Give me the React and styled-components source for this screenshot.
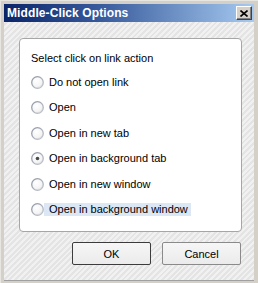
import React from "react";
import styled, { createGlobalStyle } from "styled-components";

const GlobalStyle = createGlobalStyle`
  html, body {
    margin: 0;
    padding: 0;
    background: #d4d0c8;
  }
  * {
    box-sizing: border-box;
  }
`;

const options = [
  "Do not open link",
  "Open",
  "Open in new tab",
  "Open in background tab",
  "Open in new window",
  "Open in background window",
];

const RadioIcon = ({ checked }) => (
  <svg width="13" height="13" viewBox="0 0 13 13">
    <defs>
      <linearGradient id="rim" x1="0" y1="0" x2="1" y2="1">
        <stop offset="0" stopColor="#8e95a2" />
        <stop offset="1" stopColor="#c4c8d0" />
      </linearGradient>
      <radialGradient id="fill" cx="0.4" cy="0.35" r="0.7">
        <stop offset="0" stopColor="#ffffff" />
        <stop offset="0.7" stopColor="#f4f4f4" />
        <stop offset="1" stopColor="#d8d8d8" />
      </radialGradient>
    </defs>
    <circle cx="6.5" cy="6.5" r="5.8" fill="url(#fill)" stroke="url(#rim)" strokeWidth="1.3" />
    {checked && <circle cx="6.5" cy="6.5" r="1.8" fill="#4a4a4a" />}
  </svg>
);

export default function App() {
  return (
    <Window>
      <GlobalStyle />
      <TitleBar>
        <Title>Middle-Click Options</Title>
        <CloseButton>
          <svg width="8" height="7" viewBox="0 0 8 7">
            <path d="M0.5 0.5 L7.5 6.5 M7.5 0.5 L0.5 6.5" stroke="#000" strokeWidth="1.6" />
          </svg>
        </CloseButton>
      </TitleBar>
      <Body>
        <Panel>
          <Heading>Select click on link action</Heading>
          <OptionList>
            {options.map((label, idx) => (
              <Option key={label}>
                <RadioIcon checked={idx === 3} />
                <Label $focused={idx === 5}>{label}</Label>
              </Option>
            ))}
          </OptionList>
        </Panel>
        <ButtonRow>
          <Button $default>OK</Button>
          <Button>Cancel</Button>
        </ButtonRow>
      </Body>
    </Window>
  );
}

const Window = styled.div`
  width: 258px;
  height: 283px;
  background: #d4d0c8;
  border-left: 1px solid #e8e6e0;
  border-top: 1px solid #e8e6e0;
  padding: 3px 4px 3px 3px;
  display: flex;
  flex-direction: column;
  font-family: "Liberation Sans", Arial, sans-serif;
  font-size: 11px;
  color: #000;
`;

const TitleBar = styled.div`
  height: 18px;
  flex: none;
  display: flex;
  align-items: center;
  justify-content: space-between;
  padding: 0 2px 0 3px;
  background: linear-gradient(to right, #0a246a 0%, #3a5d9e 40%, #a6caf0 100%);
`;

const Title = styled.div`
  color: #fff;
  font-weight: bold;
  font-size: 12px;
  letter-spacing: 0.1px;
`;

const CloseButton = styled.div`
  width: 16px;
  height: 14px;
  display: flex;
  align-items: center;
  justify-content: center;
  background: #d4d0c8;
  border: 1px solid;
  border-color: #ffffff #404040 #404040 #ffffff;
  box-shadow: inset -1px -1px 0 #808080;
`;

const Body = styled.div`
  flex: 1;
  display: flex;
  flex-direction: column;
  padding: 16px 12px 15px 15px;
  background: repeating-linear-gradient(
    -45deg,
    #e4e4e4 0px,
    #e4e4e4 2px,
    #f1f1f1 2px,
    #f1f1f1 4px
  );
  border-bottom: 1px solid #a0a0a0;
`;

const Panel = styled.div`
  height: 194px;
  background: #fff;
  border: 1px solid #a6a6a6;
  border-radius: 4px;
  padding: 12px 0 0 11px;
`;

const Heading = styled.div`
  line-height: 14px;
`;

const OptionList = styled.div`
  margin-top: 11px;
  display: flex;
  flex-direction: column;
  gap: 12.4px;
`;

const Option = styled.div`
  display: flex;
  align-items: center;
  height: 13px;
  gap: 0;
`;

const Label = styled.span`
  margin-left: ${(p) => (p.$focused ? "0" : "5px")};
  padding: ${(p) => (p.$focused ? "0 3px 0 5px" : "0")};
  line-height: 13px;
  background: ${(p) => (p.$focused ? "#dce7f5" : "transparent")};
`;

const ButtonRow = styled.div`
  margin-top: 10px;
  display: flex;
  justify-content: flex-end;
  gap: 11px;
  padding-right: 1px;
`;

const Button = styled.div`
  width: 79px;
  height: 23px;
  display: flex;
  align-items: center;
  justify-content: center;
  background: linear-gradient(#f6f6f6, #ebebeb);
  border: 1px solid ${(p) => (p.$default ? "#3c3c3c" : "#8a8a8a")};
  border-radius: 2px;
`;
